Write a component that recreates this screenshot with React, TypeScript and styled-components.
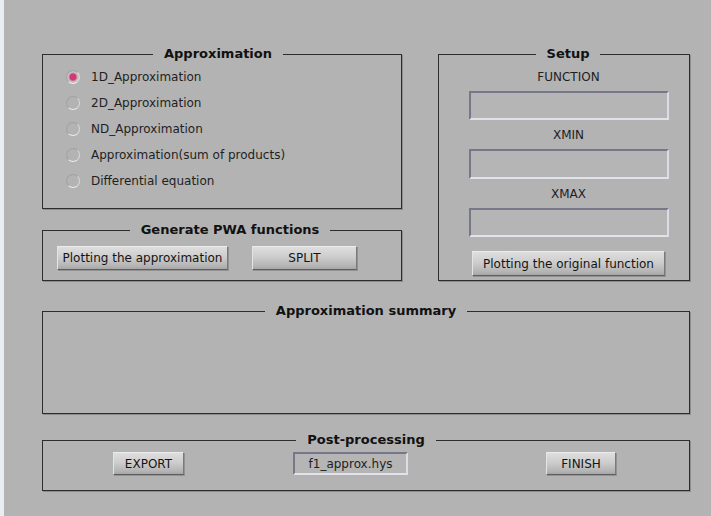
import React from "react";
import styled, { createGlobalStyle } from "styled-components";

const Global = createGlobalStyle`
  html, body {
    margin: 0;
    padding: 0;
    background: #b3b3b3;
  }
  body {
    font-family: "DejaVu Sans", Verdana, sans-serif;
    font-size: 12px;
    color: #1a1a1a;
  }
`;

const Window = styled.div`
  box-sizing: border-box;
  width: 711px;
  height: 516px;
  background: #b3b3b3;
  border-left: 4px solid #e7edf3;
  padding: 54px 0 0 38px;
  display: flex;
  flex-direction: column;
`;

const TopRow = styled.div`
  display: flex;
  gap: 36px;
`;

const Column = styled.div`
  display: flex;
  flex-direction: column;
  gap: 21px;
  width: 360px;
`;

const Frame = styled.div<{ $w?: number; $h?: number; $mt?: number }>`
  box-sizing: border-box;
  width: ${(p) => (p.$w ? `${p.$w}px` : "auto")};
  height: ${(p) => (p.$h ? `${p.$h}px` : "auto")};
  margin-top: ${(p) => p.$mt ?? 0}px;
  border: 1px solid #2d2d2d;
  box-shadow: 1px 1px 0 rgba(0, 0, 0, 0.22);
  display: flex;
  flex-direction: column;
`;

const Legend = styled.div<{ $shift?: number }>`
  align-self: center;
  margin: -9px 0 0 ${(p) => (p.$shift ?? 0) * 2}px;
  padding: 0 11px;
  background: #b3b3b3;
  font-weight: bold;
  font-size: 13px;
  line-height: 16px;
  color: #111;
  white-space: nowrap;
`;

const RadioList = styled.div`
  display: flex;
  flex-direction: column;
  margin-top: 2px;
  padding-left: 23px;
`;

const RadioRow = styled.label`
  display: flex;
  align-items: center;
  height: 26px;
  gap: 11px;
  color: #1f1f1f;
`;

const RadioDot = styled.span<{ $on?: boolean }>`
  box-sizing: border-box;
  width: 14px;
  height: 14px;
  border-radius: 50%;
  border: 1px solid;
  border-color: #a2a2a2 #d9d9d9 #ececec #a2a2a2;
  background: ${(p) =>
    p.$on
      ? "radial-gradient(circle, #cf3a76 0 3px, #d97aa0 3.8px, #c4c4c4 4.8px, #b6b6b6 100%)"
      : "transparent"};
`;

const ButtonRow = styled.div<{ $pl: number; $mt: number }>`
  display: flex;
  align-items: center;
  padding-left: ${(p) => p.$pl}px;
  margin-top: ${(p) => p.$mt}px;
`;

const Button = styled.button<{ $w: number; $h?: number; $ml?: number }>`
  box-sizing: border-box;
  width: ${(p) => p.$w}px;
  height: ${(p) => p.$h ?? 24}px;
  margin-left: ${(p) => p.$ml ?? 0}px;
  padding: 0;
  font-family: inherit;
  font-size: 12px;
  color: #141414;
  background: linear-gradient(#dedede, #cdcdcd 45%, #b5b5b5 85%, #a6a6a6);
  border: 1px solid;
  border-color: #ececec #7a7a7a #5e5e5e #e4e4e4;
  box-shadow: 1px 1px 0 rgba(0, 0, 0, 0.18);
  white-space: nowrap;
  cursor: pointer;
`;

const SetupBody = styled.div`
  display: flex;
  flex-direction: column;
  align-items: center;
  padding: 8px 20px 0 29px;
  gap: 8px;
`;

const Field = styled.div`
  display: flex;
  flex-direction: column;
  align-items: center;
  gap: 7px;
  width: 200px;
`;

const FieldLabel = styled.span`
  line-height: 14px;
  color: #1e1e1e;
`;

const Entry = styled.div<{ $w: number; $h: number; $ml?: number }>`
  box-sizing: border-box;
  width: ${(p) => p.$w}px;
  height: ${(p) => p.$h}px;
  margin-left: ${(p) => p.$ml ?? 0}px;
  border: 2px solid;
  border-color: #77778a #dcdce6 #e2e2ea #77778a;
  background: #b5b5b5;
  display: flex;
  align-items: center;
  justify-content: center;
  color: #1e1e1e;
`;

const SetupButtonWrap = styled.div`
  margin-top: 6px;
`;

export default function App() {
  const modes = [
    "1D_Approximation",
    "2D_Approximation",
    "ND_Approximation",
    "Approximation(sum of products)",
    "Differential equation",
  ];

  return (
    <>
      <Global />
      <Window>
        <TopRow>
          <Column>
            <Frame $h={155}>
              <Legend $shift={-4}>Approximation</Legend>
              <RadioList>
                {modes.map((m, i) => (
                  <RadioRow key={m}>
                    <RadioDot $on={i === 0} />
                    {m}
                  </RadioRow>
                ))}
              </RadioList>
            </Frame>
            <Frame $h={51}>
              <Legend $shift={8}>Generate PWA functions</Legend>
              <ButtonRow $pl={14} $mt={8}>
                <Button $w={171}>Plotting the approximation</Button>
                <Button $w={105} $ml={24}>
                  SPLIT
                </Button>
              </ButtonRow>
            </Frame>
          </Column>
          <Frame $w={252} $h={227}>
            <Legend $shift={4}>Setup</Legend>
            <SetupBody>
              <Field>
                <FieldLabel>FUNCTION</FieldLabel>
                <Entry $w={200} $h={29} />
              </Field>
              <Field>
                <FieldLabel>XMIN</FieldLabel>
                <Entry $w={200} $h={30} />
              </Field>
              <Field>
                <FieldLabel>XMAX</FieldLabel>
                <Entry $w={200} $h={29} />
              </Field>
              <SetupButtonWrap>
                <Button $w={193} $h={25}>
                  Plotting the original function
                </Button>
              </SetupButtonWrap>
            </SetupBody>
          </Frame>
        </TopRow>

        <Frame $w={648} $h={103} $mt={30}>
          <Legend>Approximation summary</Legend>
        </Frame>

        <Frame $w={648} $h={51} $mt={26}>
          <Legend>Post-processing</Legend>
          <ButtonRow $pl={70} $mt={4}>
            <Button $w={71} $h={23}>
              EXPORT
            </Button>
            <Entry $w={115} $h={23} $ml={109}>
              f1_approx.hys
            </Entry>
            <Button $w={70} $h={23} $ml={138}>
              FINISH
            </Button>
          </ButtonRow>
        </Frame>
      </Window>
    </>
  );
}
